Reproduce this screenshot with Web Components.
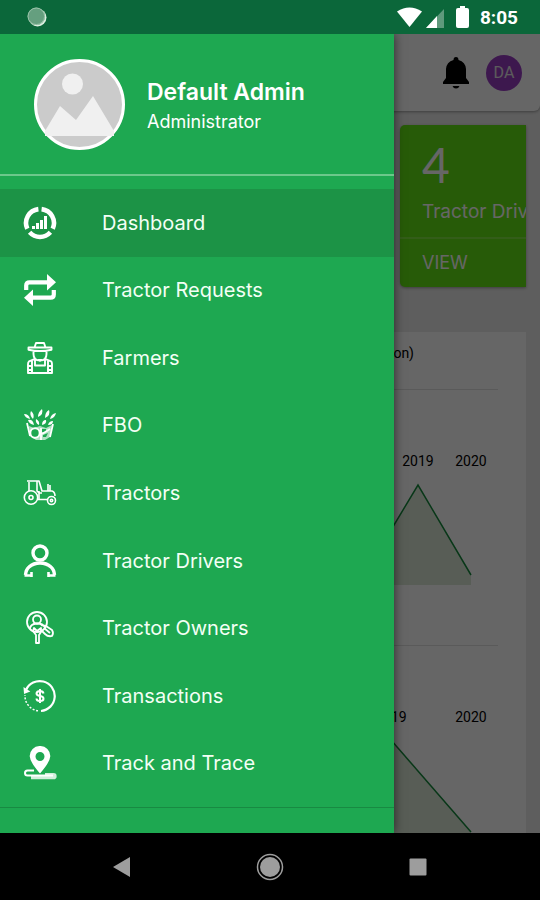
<!DOCTYPE html>
<html lang="en">
<head>
<meta charset="utf-8">
<meta name="viewport" content="width=device-width, initial-scale=1">
<title>Tractor Admin</title>
<style>
html, body { height: 100%; margin: 0; }
body { background: #000; font-family: Inter, "Liberation Sans", sans-serif; }
</style>
</head>
<body>
<admin-app></admin-app>

<script>
const define = (name, html, setup) => {
  const template = document.createElement('template');
  template.innerHTML = html;
  customElements.define(name, class extends HTMLElement {
    constructor() {
      super();
      this.attachShadow({ mode: 'open' }).append(template.content.cloneNode(true));
    }
    connectedCallback() { if (setup) setup(this, this.shadowRoot); }
  });
};

const icons = {
  dashboard: `<g fill="none" stroke="#fff" stroke-width="4.600"><path d="M18.600 3.100A14 14 0 0 1 29.700 22.800M27.400 26.300A14 14 0 0 1 6.600 26.300M4.300 22.800A14 14 0 0 1 15.400 3.100"/></g><path fill="#fff" d="M9 20h3v3H9zM13 17h3v6h-3zM17 14h3v9h-3zM21 10h3v13h-3z"/>`,
  requests: `<g fill="none" stroke="#fff" stroke-width="4.200"><path d="M3.200 17V12.500Q3.200 9.300 6.500 9.300H25"/><path d="M30.800 17v4.500q0 3.200-3.300 3.200H9"/></g><path fill="#fff" d="M24 1l9 8.300-9 8.300zM10 16.500L1 24.700 10 33z"/>`,
  farmers: `<g fill="none" stroke="#fff" stroke-width="1.900" stroke-linejoin="round"><path d="M11.500 6.500L13 2h8l1.500 4.500M5.500 6.500h23v2.200q-11.500 2.600-23 0zM10.500 10v3q0 6.500 6.500 6.500t6.500-6.500v-3M12 17.800l-6 2.500q-1 1-1 3V32h24v-9q0-2-1-2.700l-6-2.500M12 18v6.500h10V18M9 20v12M25 20v12M5.500 25h3.500M5.500 29h3.500M25 25h3.500M25 29h3.500"/></g><path fill="#fff" d="M14.500 18h5l-2.500 3z"/>`,
  fbo: `<g fill="#fff"><path d="M1 6q5 0 6 5-5-1-6-5zM8 3q4 3 2 8-4-4-2-8zM15 9q0-5 4-8 2 5-4 8zM22 10q0-6 4-8 2 5-4 8zM27 11q1-5 6-6-1 5-6 6zM5 12q5-1 6 5-5-1-6-5zM13 11q4 2 3 6-4-2-3-6zM19 17q0-5 4-5 1 4-4 5zM25 17q1-4 5-4 0 4-5 4z"/><path d="M6 18l5 2 6-2 6 2 6-3-2 12-5 3h-9l-6-4z" opacity=".65"/></g><g fill="#1ea851"><circle cx="12" cy="25" r="3.700"/><path d="M19 21h4v3h-4zM20 27l5-2-2 4h-3z"/></g><g fill="none" stroke="#fff" stroke-width="1.800"><circle cx="12" cy="25" r="4.800"/><path d="M4 15l3 13M30 16l-3 13M18 20v12M19 26l8-5"/></g>`,
  tractors: `<g fill="none" stroke="#fff" stroke-width="1.600" stroke-linejoin="round"><circle cx="8" cy="21.500" r="6.700"/><circle cx="8" cy="21.500" r="2"/><circle cx="28.500" cy="24.500" r="4"/><circle cx="28.500" cy="24.500" r="1.200"/><path d="M4 5h12l3 10h10q3 1 3 5M6 6v9M14 5.500V15l2 2h3M15 23.500h9M25 15V8M27 15V9M16 15v8"/></g>`,
  drivers: `<g fill="none" stroke="#fff" stroke-width="3.400"><circle cx="17" cy="9" r="7"/><path d="M2.500 31Q3 25.500 6 23q4.500-4 11-4t11 4q3 2.500 3.500 8"/><path d="M8.500 33v-5M25.500 33v-5M1.500 31.500h8M24.500 31.500h8" stroke-width="2.600"/></g>`,
  owners: `<g fill="none" stroke="#fff" stroke-width="1.800" stroke-linejoin="round"><circle cx="14" cy="11" r="10"/><circle cx="14" cy="8.500" r="4"/><path d="M7 18q0-5 7-5.500 6 0 8 4M11 17l3 3 4-3v4l-2 3v8h-3v-8l-3-4zM18 14l5 1 6 4q2 3 0 6-4 1-7-2l-4-4M21 17l6 5"/></g>`,
  transactions: `<g fill="none" stroke="#fff" stroke-width="2.200"><path d="M3 11A15 15 0 1 1 18 32"/><path d="M15 31.800A15 15 0 0 1 2 16" stroke-dasharray="2 1.600" stroke-width="1.500"/></g><path fill="#fff" d="M.5 8l6.800 4.500L1 15z"/><g fill="none" stroke="#fff" stroke-width="2"><path d="M20.500 14.500q-.5-2.500-3.500-2.500t-3.500 2.300Q13.500 16.500 17 17t3.500 2.700Q20.500 22 17 22t-3.500-2.500M17 10v14"/></g>`,
  track: `<path fill="#fff" fill-rule="evenodd" d="M17 0a10 10 0 0 1 10.300 10.300Q27 16 17 27.500 7 16 6.700 10.300A10 10 0 0 1 17 0zm0 6a4.500 4.500 0 1 0 0 9 4.500 4.500 0 0 0 0-9z"/><path fill="none" stroke="#fff" stroke-width="2" d="M11 24.500H4.500a2.500 2.500 0 0 0 0 5H30"/><path fill="#fff" opacity=".8" d="M22 27h8.500a3 3 0 0 1 0 6.300H8V30h14z"/>`
};

define('status-bar', `
<style>
:host { display: flex; align-items: center; height: 34px; padding: 0 22px 0 27px; background: #0b673a; color: #fff; font: 700 19px/24px Roboto, sans-serif; }
.push { margin-left: auto; }
svg { flex: none; }
time { margin-left: 10px; padding-top: 2px; }
</style>
<svg width="20" height="20" viewBox="0 0 20 20"><circle cx="10.500" cy="10.500" r="9" fill="#dcefe0"/><circle cx="9.300" cy="9.300" r="8.700" fill="#659f7f"/><circle cx="9.300" cy="9.300" r="8.300" fill="none" stroke="#9cc4aa"/></svg>
<svg class="push" width="73" height="24" viewBox="0 0 73 24"><path fill="#fff" d="M0 6.500Q12.500-1.500 25 6.500L12.500 22z"/><path fill="#5f9a7c" d="M47 4v19H29z"/><path fill="#fff" d="M40 11v12H29z"/><path fill="#fff" d="M61 3h2V1h5v2h2q2 0 2 2v16q0 2-2 2h-9q-2 0-2-2V5q0-2 2-2z"/></svg>
<time>8:05</time>`);

define('app-bar', `
<style>
:host { display: flex; align-items: center; justify-content: flex-end; gap: 15px; height: 77px; padding-right: 18px; box-sizing: border-box; background: #fff; border-radius: 0 0 6px 6px; box-shadow: 0 1px 3px #999; }
button { display: grid; place-items: center; border: 0; padding: 0; background: none; }
.user { width: 36px; height: 36px; border-radius: 50%; background: #9a3dc4; color: #e5e5e5; font: 400 16px/20px Roboto, sans-serif; }
</style>
<button aria-label="Notifications"><svg width="30" height="34" viewBox="0 0 30 34"><path d="M15 1q2.500 0 2.500 3Q24.500 6 25 13v9l3 4v2H2v-2l3-4v-9Q5.500 6 12.500 4q0-3 2.500-3zM11.500 30h7q-1 2.500-3.500 2.500t-3.500-2.500z"/></svg></button>
<button class="user">DA</button>`);

define('stat-card', `
<style>
:host { display: block; width: 126px; height: 162px; overflow: hidden; white-space: nowrap; border-radius: 5px 0 0 5px; background: #62e314; color: #fff; box-shadow: 0 1px 3px #999; }
.main { height: 114px; box-sizing: border-box; padding: 12px 0 0 22px; border-bottom: 2px solid #7fe93f; }
strong { display: block; font: 400 48px/56px Lato, sans-serif; }
span { display: block; margin-top: 7px; font-size: 19px; line-height: 24px; }
a { display: block; padding: 12px 22px; font-size: 18px; line-height: 24px; color: inherit; text-decoration: none; }
</style>
<div class="main"><strong><slot name="value"></slot></strong><span><slot></slot></span></div>
<a href="#drivers">VIEW</a>`);

define('line-chart', `
<style>
:host { display: flex; justify-content: flex-end; border-top: 1px solid #e2e2e2; }
svg { display: block; flex: none; }
text { font: 400 14px Roboto, sans-serif; text-anchor: middle; fill: #000; }
</style>
<svg width="300" height="255" viewBox="0 0 300 255"></svg>`, (host, root) => {
  const pts = host.getAttribute('points').split(' ');
  const first = pts[0].split(',')[0], last = pts[pts.length - 1].split(',')[0];
  root.querySelector('svg').innerHTML =
    `<text x="${host.getAttribute('mid')}" y="76">2019</text><text x="273" y="76">2020</text>
     <path fill="#dbe9d8" d="M${pts.join('L')}L${last},195L${first},195z"/>
     <polyline fill="none" stroke="#168a3c" stroke-width="1.500" points="${pts.join(' ')}"/>`;
});

define('dashboard-page', `
<style>
:host { display: block; overflow: hidden; background: #ebebeb; }
.cards { display: flex; justify-content: flex-end; padding: 14px 14px 45px; }
.report { margin: 0 14px; padding: 0 28px; background: #fff; color: #000; }
h2 { margin: 0; padding: 11px 84px 25px 0; text-align: right; font: 400 14px/21px Roboto, sans-serif; }
</style>
<app-bar></app-bar>
<div class="cards"><stat-card><span slot="value">4</span>Tractor Drivers</stat-card></div>
<section class="report">
<h2>on)</h2>
<line-chart mid="220" points="166,185 220,95 273,185"></line-chart>
<line-chart mid="193" points="193,94 273,186"></line-chart>
</section>`);

define('menu-item', `
<style>
:host { display: grid; }
a { display: flex; align-items: center; gap: 45px; padding: 0 23px; color: #f3fff5; text-decoration: none; font-size: 20px; line-height: 26px; font-weight: 400; }
:host([active]) a { background: #1c9346; }
svg { flex: none; width: 34px; height: 34px; }
</style>
<a href="#"><svg viewBox="0 0 34 34" aria-hidden="true"></svg><span><slot></slot></span></a>`, (host, root) => {
  root.querySelector('svg').innerHTML = icons[host.getAttribute('icon')];
});

define('side-drawer', `
<style>
:host { display: block; overflow: hidden; background: #1ea851; color: #fff; box-shadow: 0 0 10px rgba(0,0,0,.6); }
header { display: flex; align-items: center; gap: 22px; height: 142px; box-sizing: border-box; padding: 0 34px; border-bottom: 2px solid #6cc88b; }
header svg { flex: none; }
h1 { margin: 0; font-size: 23px; line-height: 28px; font-weight: 600; }
p { margin: 4px 0 0; font-size: 18px; line-height: 24px; font-weight: 400; }
header div { padding-top: 4px; }
nav { display: grid; grid-auto-rows: 1fr; height: 608px; margin-top: 13px; padding-bottom: 10px; border-bottom: 1px solid #188a42; }
</style>
<header>
<svg width="91" height="91" viewBox="0 0 91 91"><circle cx="45.500" cy="45.500" r="44" fill="#cbcbcb" stroke="#fff" stroke-width="3"/><circle cx="38.500" cy="25" r="10.500" fill="#f0f0f0"/><path fill="#f0f0f0" d="M11 72L26 47l16 14 17-24 21 35v5H11z"/></svg>
<div><h1>Default Admin</h1><p>Administrator</p></div>
</header>
<nav>
<menu-item icon="dashboard" active>Dashboard</menu-item>
<menu-item icon="requests">Tractor Requests</menu-item>
<menu-item icon="farmers">Farmers</menu-item>
<menu-item icon="fbo">FBO</menu-item>
<menu-item icon="tractors">Tractors</menu-item>
<menu-item icon="drivers">Tractor Drivers</menu-item>
<menu-item icon="owners">Tractor Owners</menu-item>
<menu-item icon="transactions">Transactions</menu-item>
<menu-item icon="track">Track and Trace</menu-item>
</nav>`);

define('system-nav', `
<style>
:host { display: flex; align-items: center; justify-content: center; gap: 118px; height: 67px; background: #000; }
button { display: block; border: 0; padding: 0; background: none; }
svg { display: block; }
</style>
<button aria-label="Back"><svg width="30" height="30" viewBox="0 0 30 30"><path fill="#9d9d9d" d="M6 15L23 5v20z"/></svg></button>
<button aria-label="Home"><svg width="30" height="30" viewBox="0 0 30 30"><circle cx="15" cy="15" r="12.500" fill="none" stroke="#9d9d9d" stroke-width="1.500"/><circle cx="15" cy="15" r="10" fill="#9d9d9d"/></svg></button>
<button aria-label="Recent apps"><svg width="30" height="30" viewBox="0 0 30 30"><rect x="6.500" y="6.500" width="17" height="17" rx="1" fill="#9d9d9d"/></svg></button>`);

define('admin-app', `
<style>
:host { display: grid; grid-template-rows: auto minmax(0, 1fr) auto; height: 100vh; }
.screen { position: relative; display: grid; overflow: hidden; }
.scrim { position: absolute; inset: 0; background: rgba(0,0,0,.6); }
side-drawer { position: absolute; inset: 0 146px 0 0; }
</style>
<status-bar></status-bar>
<div class="screen">
<dashboard-page></dashboard-page>
<div class="scrim"></div>
<side-drawer></side-drawer>
</div>
<system-nav></system-nav>`);
</script>
</body>
</html>
